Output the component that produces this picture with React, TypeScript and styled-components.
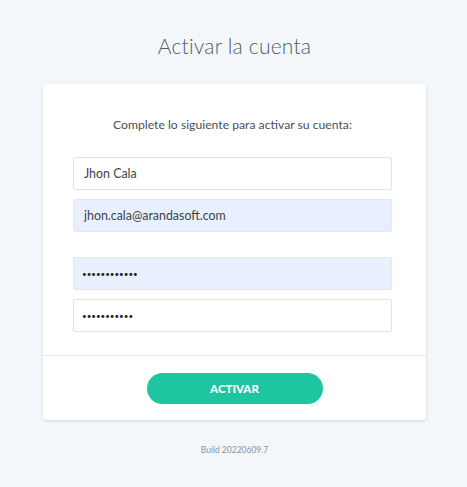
import React from "react";
import styled, { createGlobalStyle } from "styled-components";

const GlobalStyle = createGlobalStyle`
  html, body {
    margin: 0;
    padding: 0;
    background: #f4f7fa;
    font-family: "Lato", "Noto Sans", sans-serif;
  }
`;

const Page = styled.div`
  display: flex;
  flex-direction: column;
  align-items: center;
  padding: 31px 0 0 2px;
  min-height: 487px;
  box-sizing: border-box;
`;

const Title = styled.h1`
  margin: 0 0 23px;
  font-size: 21px;
  font-weight: 300;
  color: #535b63;
  line-height: 30px;
  letter-spacing: 0.2px;
`;

const Card = styled.div`
  width: 383px;
  background: #fff;
  border-radius: 3px;
  box-shadow: 0 1px 3px rgba(40, 60, 90, 0.18);
`;

const CardBody = styled.form`
  display: flex;
  flex-direction: column;
  padding: 32px 34px 23px 30px;
`;

const Lead = styled.p`
  margin: 0 0 23px;
  text-align: center;
  font-size: 12.2px;
  line-height: 18px;
  color: #4a5058;
`;

const Field = styled.input<{ $filled?: boolean; $gap?: number }>`
  box-sizing: border-box;
  width: 319px;
  height: 33px;
  margin-top: ${(p) => p.$gap ?? 0}px;
  padding: 0 10px;
  border: 1px solid ${(p) => (p.$filled ? "#e1e8f3" : "#dfe3e7")};
  border-radius: 2px;
  background: ${(p) => (p.$filled ? "#e8f0fe" : "#fff")};
  font-family: "Lato", "Noto Sans", sans-serif;
  font-size: 12.4px;
  color: #3d4349;
  outline: none;

  &[type="password"] {
    padding-left: 8px;
    font-size: 8px;
    color: #222;
    letter-spacing: 0;
  }
`;

const CardFooter = styled.div`
  display: flex;
  justify-content: center;
  padding: 17px 0 16px;
  border-top: 1px solid #e3e7eb;
`;

const Button = styled.button`
  width: 176px;
  height: 31px;
  border: none;
  border-radius: 16px;
  background: #1fc5a0;
  color: #fff;
  font-family: "Lato", "Noto Sans", sans-serif;
  font-size: 11.5px;
  font-weight: 900;
  letter-spacing: 0;
  cursor: pointer;
`;

const Build = styled.div`
  margin-top: 25px;
  font-size: 8.5px;
  color: #8b939c;
`;

export default function App() {
  return (
    <>
      <GlobalStyle />
      <Page>
        <Title>Activar la cuenta</Title>
        <Card>
          <CardBody onSubmit={(e) => e.preventDefault()}>
            <Lead>Complete lo siguiente para activar su cuenta:</Lead>
            <Field type="text" defaultValue="Jhon Cala" />
            <Field type="email" $filled $gap={9} defaultValue="jhon.cala@arandasoft.com" />
            <Field type="password" $filled $gap={25} defaultValue="contraseña12" />
            <Field type="password" $gap={9} defaultValue="contraseña1" />
          </CardBody>
          <CardFooter>
            <Button type="button">ACTIVAR</Button>
          </CardFooter>
        </Card>
        <Build>Build 20220609.7</Build>
      </Page>
    </>
  );
}
